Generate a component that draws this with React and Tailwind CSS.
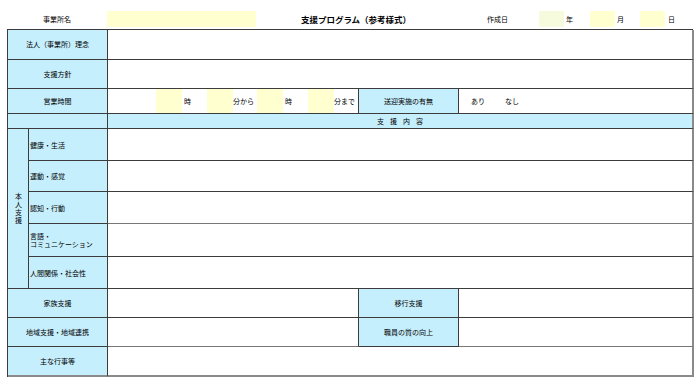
import React from 'react';

const font = { fontFamily: '"Noto Sans CJK JP", "Noto Sans", sans-serif' };

const cell = 'border-r border-b border-[#3c3c3c]';
const blue = 'bg-[#c6effd]';
const yellow = 'bg-[#ffffcf]';

const subRows = [
  { label: '健康・生活', h: 'h-[32px]' },
  { label: '運動・感覚', h: 'h-[31px]' },
  { label: '認知・行動', h: 'h-[32px]' },
  { label: '言語・\nコミュニケーション', h: 'h-[33px]' },
  { label: '人間関係・社会性', h: 'h-[32px]' },
];

const App = () => {
  return (
    <div className="w-[700px] h-[380px] bg-white text-black text-[7px] leading-none" style={font}>
      {/* Header */}
      <div className="flex items-center h-[16px] mt-[11px] mb-[2px] pl-[7px]">
        <div className="w-[100px] text-center">事業所名</div>
        <div className={`w-[149px] h-full ${yellow}`}></div>
        <div className="w-[200px] text-center text-[8.5px] font-bold">支援プログラム（参考様式）</div>
        <div className="w-[83px] text-center">作成日</div>
        <div className="w-[25px] h-full bg-[#f5fbdc]"></div>
        <div className="w-[26px] pl-[2px]">年</div>
        <div className={`w-[25px] h-full ${yellow}`}></div>
        <div className="w-[25px] pl-[2px]">月</div>
        <div className={`w-[25px] h-full ${yellow}`}></div>
        <div className="w-[26px] pl-[3px]">日</div>
      </div>

      {/* Table */}
      <div className="ml-[7px] w-[686px] grid grid-cols-[21px_79px_251px_100px_235px] border-t border-l border-[#3c3c3c]">
        {/* 理念 */}
        <div className={`col-span-2 h-[30px] flex items-center justify-center ${blue} ${cell}`}>法人（事業所）理念</div>
        <div className={`col-span-3 ${cell} border-r-2 border-r-[#8a8a8a]`}></div>

        {/* 方針 */}
        <div className={`col-span-2 h-[29px] flex items-center justify-center ${blue} ${cell}`}>支援方針</div>
        <div className={`col-span-3 ${cell} border-r-2 border-r-[#8a8a8a]`}></div>

        {/* 営業時間 */}
        <div className={`col-span-2 h-[25px] flex items-center justify-center ${blue} ${cell}`}>営業時間</div>
        <div className={`flex ${cell}`}>
          <div className="w-[48px]"></div>
          <div className={`w-[26px] ${yellow}`}></div>
          <div className="w-[25px] flex items-center pl-[2px]">時</div>
          <div className={`w-[26px] ${yellow}`}></div>
          <div className="w-[24px] flex items-center">分から</div>
          <div className={`w-[26px] ${yellow}`}></div>
          <div className="w-[25px] flex items-center pl-[2px]">時</div>
          <div className={`w-[26px] ${yellow}`}></div>
          <div className="flex-1 flex items-center">分まで</div>
        </div>
        <div className={`flex items-center justify-center ${blue} ${cell}`}>送迎実施の有無</div>
        <div className={`flex items-center pl-[12px] gap-[20px] ${cell} border-r-2 border-r-[#8a8a8a]`}>
          <span>あり</span>
          <span>なし</span>
        </div>

        {/* 支援内容 */}
        <div className={`col-span-2 h-[15px] ${blue} ${cell}`}></div>
        <div className={`col-span-3 flex items-center justify-center tracking-[6px] pl-[6px] ${blue} ${cell} border-r-2 border-r-[#8a8a8a]`}>
          支援内容
        </div>

        {/* 本人支援 */}
        <div className={`row-span-5 flex items-center justify-center ${blue} ${cell}`}>
          <span className="[writing-mode:vertical-rl] [text-orientation:upright] tracking-[1px]">本人支援</span>
        </div>
        {subRows.map((r, i) => (
          <React.Fragment key={i}>
            <div className={`${r.h} flex items-center pl-[1px] whitespace-pre-line leading-[8px] ${blue} ${cell}`}>
              {r.label}
            </div>
            <div className={`col-span-3 ${cell} border-r-2 border-r-[#8a8a8a] ${i === 2 ? 'border-b-[#777]' : ''}`}></div>
          </React.Fragment>
        ))}

        {/* 家族支援 */}
        <div className={`col-span-2 h-[29px] flex items-center justify-center ${blue} ${cell}`}>家族支援</div>
        <div className={cell}></div>
        <div className={`flex items-center justify-center ${blue} ${cell}`}>移行支援</div>
        <div className={`${cell} border-r-2 border-r-[#8a8a8a]`}></div>

        {/* 地域支援 */}
        <div className={`col-span-2 h-[29px] flex items-center justify-center ${blue} ${cell}`}>地域支援・地域連携</div>
        <div className={`${cell} border-b-[#777]`}></div>
        <div className={`flex items-center justify-center ${blue} ${cell}`}>職員の質の向上</div>
        <div className={`${cell} border-b-[#777] border-r-2 border-r-[#8a8a8a]`}></div>

        {/* 行事 */}
        <div className={`col-span-2 h-[30px] flex items-center justify-center ${blue} ${cell} border-b-2 border-b-[#8a8a8a]`}>主な行事等</div>
        <div className={`col-span-3 ${cell} border-b-2 border-b-[#8a8a8a] border-r-2 border-r-[#8a8a8a]`}></div>
      </div>
    </div>
  );
};

export default App;
